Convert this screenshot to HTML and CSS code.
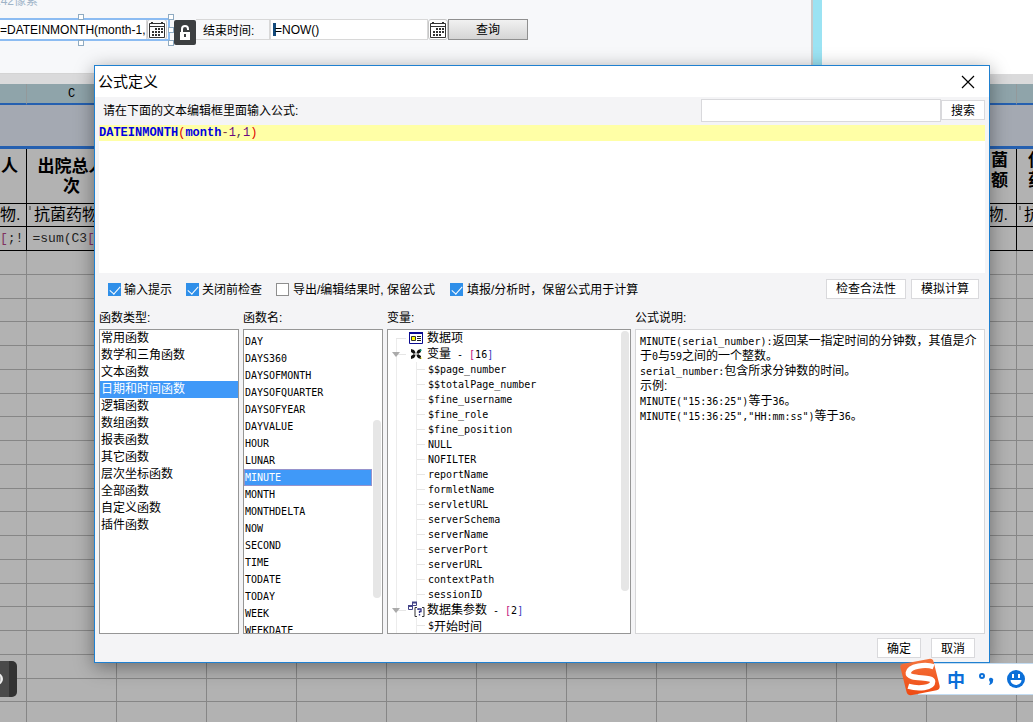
FILE: index.html
```html
<!DOCTYPE html>
<html lang="zh-CN">
<head>
<meta charset="utf-8">
<title>公式定义</title>
<link rel="stylesheet" href="styles.css">
</head>
<body>
<div class="workspace">
  <header class="top">
    <div class="form-area">
      <span class="size-hint">242像素</span>
      <div class="params">
        <div class="picker selected">
          <input class="field" type="text" value="=DATEINMONTH(month-1," aria-label="开始时间">
          <button class="cal" aria-label="选择开始时间"><svg viewBox="0 0 18 18"><path d="M1.5 2.5h15v14h-15zM1 5.5h16" fill="none" stroke="#333"/><path d="M4 1v2M14 1v2" stroke="#333" stroke-width="2"/><path d="M7 8h9M4 11h12M4 14h9" stroke="#333" stroke-width="2" stroke-dasharray="2 1"/></svg></button>
          <i class="handle h1"></i><i class="handle h2"></i><i class="handle h3"></i><i class="handle h4"></i><i class="handle h5"></i>
        </div>
        <button class="lock" aria-label="锁定"><svg viewBox="0 0 22 24"><path d="M6 11h10v8H6z" fill="#fff"/><path d="M8 11V8a3 3 0 0 1 6 0v1" fill="none" stroke="#fff" stroke-width="2"/><path d="M11 13v3" stroke="#3c3f41" stroke-width="2"/></svg></button>
        <label class="caption" for="end">结束时间:</label>
        <div class="picker">
          <input class="field marked" id="end" type="text" value="=NOW()">
          <button class="cal" aria-label="选择结束时间"><svg viewBox="0 0 18 18"><path d="M1.5 2.5h15v14h-15zM1 5.5h16" fill="none" stroke="#333"/><path d="M4 1v2M14 1v2" stroke="#333" stroke-width="2"/><path d="M7 8h9M4 11h12M4 14h9" stroke="#333" stroke-width="2" stroke-dasharray="2 1"/></svg></button>
        </div>
        <button class="query">查询</button>
      </div>
    </div>
    <div class="edge"></div>
  </header>
  <div class="strip"></div>
  <table class="sheet">
    <colgroup><col class="first"><col class="std"><col class="std"><col class="std"><col class="std"><col class="std"><col class="std"><col class="std"><col class="std"><col class="std"><col class="std"><col class="std"><col></colgroup>
    <thead>
      <tr class="letters"><th></th><th>C</th><th></th><th></th><th></th><th></th><th></th><th></th><th></th><th></th><th></th><th></th><th></th></tr>
      <tr class="title"><td colspan="13"></td></tr>
    </thead>
    <tbody class="data">
      <tr class="heads"><th class="end">人<br>&nbsp;</th><th>出院总人<br>次</th><th></th><th></th><th></th><th></th><th></th><th></th><th></th><th></th><th></th><th class="end up">菌<br>额</th><th class="start up">使<br>药</th></tr>
      <tr class="fields"><td class="end">物.</td><td class="start mark">抗菌药物</td><td></td><td></td><td></td><td></td><td></td><td></td><td></td><td></td><td></td><td class="end">物.</td><td class="start mark">抗</td></tr>
      <tr class="sums"><td class="end"><div><b>[</b>;!</div></td><td><div>=sum(C3<b>[</b>;!<br>0])</div></td><td></td><td></td><td></td><td></td><td></td><td></td><td></td><td></td><td></td><td></td><td></td></tr>
    </tbody>
    <tbody class="blank">
      <tr><td></td><td></td><td></td><td></td><td></td><td></td><td></td><td></td><td></td><td></td><td></td><td></td><td></td></tr>
      <tr><td></td><td></td><td></td><td></td><td></td><td></td><td></td><td></td><td></td><td></td><td></td><td></td><td></td></tr>
      <tr><td></td><td></td><td></td><td></td><td></td><td></td><td></td><td></td><td></td><td></td><td></td><td></td><td></td></tr>
      <tr><td></td><td></td><td></td><td></td><td></td><td></td><td></td><td></td><td></td><td></td><td></td><td></td><td></td></tr>
      <tr><td></td><td></td><td></td><td></td><td></td><td></td><td></td><td></td><td></td><td></td><td></td><td></td><td></td></tr>
      <tr><td></td><td></td><td></td><td></td><td></td><td></td><td></td><td></td><td></td><td></td><td></td><td></td><td></td></tr>
      <tr><td></td><td></td><td></td><td></td><td></td><td></td><td></td><td></td><td></td><td></td><td></td><td></td><td></td></tr>
      <tr><td></td><td></td><td></td><td></td><td></td><td></td><td></td><td></td><td></td><td></td><td></td><td></td><td></td></tr>
      <tr><td></td><td></td><td></td><td></td><td></td><td></td><td></td><td></td><td></td><td></td><td></td><td></td><td></td></tr>
      <tr><td></td><td></td><td></td><td></td><td></td><td></td><td></td><td></td><td></td><td></td><td></td><td></td><td></td></tr>
      <tr><td></td><td></td><td></td><td></td><td></td><td></td><td></td><td></td><td></td><td></td><td></td><td></td><td></td></tr>
      <tr><td></td><td></td><td></td><td></td><td></td><td></td><td></td><td></td><td></td><td></td><td></td><td></td><td></td></tr>
      <tr><td></td><td></td><td></td><td></td><td></td><td></td><td></td><td></td><td></td><td></td><td></td><td></td><td></td></tr>
      <tr><td></td><td></td><td></td><td></td><td></td><td></td><td></td><td></td><td></td><td></td><td></td><td></td><td></td></tr>
      <tr><td></td><td></td><td></td><td></td><td></td><td></td><td></td><td></td><td></td><td></td><td></td><td></td><td></td></tr>
      <tr><td></td><td></td><td></td><td></td><td></td><td></td><td></td><td></td><td></td><td></td><td></td><td></td><td></td></tr>
      <tr><td></td><td></td><td></td><td></td><td></td><td></td><td></td><td></td><td></td><td></td><td></td><td></td><td></td></tr>
      <tr><td></td><td></td><td></td><td></td><td></td><td></td><td></td><td></td><td></td><td></td><td></td><td></td><td></td></tr>
      <tr><td></td><td></td><td></td><td></td><td></td><td></td><td></td><td></td><td></td><td></td><td></td><td></td><td></td></tr>
      <tr><td></td><td></td><td></td><td></td><td></td><td></td><td></td><td></td><td></td><td></td><td></td><td></td><td></td></tr>
    </tbody>
  </table>

  <section class="dialog" role="dialog" aria-labelledby="dlg-title">
    <div class="titlebar">
      <h1 id="dlg-title">公式定义</h1>
      <button class="close" aria-label="关闭"><svg viewBox="0 0 14 14"><path d="M1 1l12 12M13 1L1 13" stroke="#000" stroke-width="1.2"/></svg></button>
    </div>
    <div class="content">
      <div class="search-row">
        <span class="prompt">请在下面的文本编辑框里面输入公式:</span>
        <input class="search" type="text" aria-label="搜索函数">
        <button class="btn">搜索</button>
      </div>
      <div class="editor" contenteditable="true" role="textbox" aria-label="公式" spellcheck="false"><div class="line"><b>DATEINMONTH</b><span class="paren">(</span><b>month</b><span class="op">-</span><span class="num">1</span>,<span class="num">1</span><span class="paren">)</span></div></div>
      <div class="options">
        <label><input type="checkbox" checked>输入提示</label>
        <label><input type="checkbox" checked>关闭前检查</label>
        <label class="wide"><input type="checkbox">导出/编辑结果时, 保留公式</label>
        <label class="wide"><input type="checkbox" checked>填报/分析时，保留公式用于计算</label>
        <div class="actions"><button class="btn">检查合法性</button><button class="btn">模拟计算</button></div>
      </div>
      <div class="panels">
        <h2>函数类型:</h2><h2>函数名:</h2><h2>变量:</h2><h2>公式说明:</h2>
        <ul class="list" role="listbox" aria-label="函数类型">
          <li>常用函数</li><li>数学和三角函数</li><li>文本函数</li><li class="on">日期和时间函数</li><li>逻辑函数</li><li>数组函数</li><li>报表函数</li><li>其它函数</li><li>层次坐标函数</li><li>全部函数</li><li>自定义函数</li><li>插件函数</li>
        </ul>
        <div class="box">
          <ul class="list names" role="listbox" aria-label="函数名">
            <li>DAY</li><li>DAYS360</li><li>DAYSOFMONTH</li><li>DAYSOFQUARTER</li><li>DAYSOFYEAR</li><li>DAYVALUE</li><li>HOUR</li><li>LUNAR</li><li class="on">MINUTE</li><li>MONTH</li><li>MONTHDELTA</li><li>NOW</li><li>SECOND</li><li>TIME</li><li>TODATE</li><li>TODAY</li><li>WEEK</li><li>WEEKDATE</li>
          </ul>
          <i class="thumb low"></i>
        </div>
        <div class="box">
          <ul class="tree">
            <li><div class="node"><i class="twig"></i><svg class="icon" viewBox="0 0 14 14"><path d="M.5 1.500h13v11H.5z" fill="#fff" stroke="#0a0a90"/><path d="M0 2h14" stroke="#0a0a90" stroke-width="2"/><path d="M2.500 5.500h4v4h-4z" fill="#ff0" stroke="#333"/><path d="M8 5.500h4M8 7.500h4M8 9.500h4" stroke="#222"/></svg>数据项</div></li>
            <li><div class="node"><i class="twig arrow"></i><svg class="icon" viewBox="0 0 14 14"><path d="M2 2l3 1 2 3 2-3 3-1v3L9 7l3 2v3l-3-1-2-3-2 3-3 1V9l3-2-3-2z" fill="#111"/><path d="M7 5v4M5 7h4" stroke="#fff"/><path d="M11 2l2 1-2 2z" fill="#0a8a70"/><path d="M11 10l2 1-1 1z" fill="#dd0"/></svg>变量<span class="lat">&nbsp;- <b>[</b>16<b class="r">]</b></span></div>
              <ul>
                <li>$$page_number</li><li>$$totalPage_number</li><li>$fine_username</li><li>$fine_role</li><li>$fine_position</li><li>NULL</li><li>NOFILTER</li><li>reportName</li><li>formletName</li><li>servletURL</li><li>serverSchema</li><li>serverName</li><li>serverPort</li><li>serverURL</li><li>contextPath</li><li>sessionID</li>
              </ul>
            </li>
            <li><div class="node"><i class="twig arrow"></i><svg class="icon" viewBox="0 0 14 14"><path d="M3.500-.5h4v3h-4zM-.5 2.500h4v4h-4z" fill="#fff" stroke="#448"/><path d="M3-.5h5M-1 3h5" stroke="#448" stroke-width="2"/><path d="M8 4.500H6v9h2M13 4.500h2v9h-2" fill="none" stroke="#333"/><path d="M9 7V6h3v2.500h-1.500V10M10.500 11v1.500" fill="none" stroke="#338" stroke-width="1.300"/></svg>数据集参数<span class="lat">&nbsp;- <b>[</b>2<b class="r">]</b></span></div>
              <ul><li>$<span class="han">开始时间</span></li></ul>
            </li>
          </ul>
          <i class="thumb high"></i>
        </div>
        <div class="desc">
          <p><span class="lat">MINUTE(serial_number):</span>返回某一指定时间的分钟数，其值是介于<span class="lat">0</span>与<span class="lat">59</span>之间的一个整数。</p>
          <p><span class="lat">serial_number:</span>包含所求分钟数的时间。</p>
          <p>示例:</p>
          <p><span class="lat">MINUTE("15:36:25")</span>等于<span class="lat">36</span>。</p>
          <p><span class="lat">MINUTE("15:36:25","HH:mm:ss")</span>等于<span class="lat">36</span>。</p>
        </div>
      </div>
      <div class="footer"><button class="btn">确定</button><button class="btn">取消</button></div>
    </div>
  </section>

  <button class="side-tab" aria-label="展开"><i></i></button>
  <div class="ime">
    <svg class="sogou" viewBox="0 0 40 40"><defs><linearGradient id="g" x1="0" y1="0" x2="0" y2="1"><stop offset="0" stop-color="#f4733c"/><stop offset="1" stop-color="#ef4a12"/></linearGradient></defs><path d="M3 6L29 1q4-1 5 3l6 24q1 4-3 5l-25 5q-5 1-6-4L0 10q-1-3 3-4z" fill="url(#g)"/><path d="M34 9C26 6 9 8 8 15c-1 8 25 3 25 9 0 7-15 8-25 5" fill="none" stroke="#fff" stroke-width="5.500"/></svg>
    <button class="tool">中</button>
    <button class="tool" aria-label="中文标点"><svg viewBox="0 0 18 18"><circle cx="5" cy="6" r="2" fill="none" stroke="#0b6fd8" stroke-width="2"/><path d="M12 9a2 2 0 1 1 4 2q0 3-4 4 1-2 1-3-1-1-1-3z" fill="#0b6fd8"/></svg></button>
    <button class="tool" aria-label="表情"><svg viewBox="0 0 18 18"><circle cx="9" cy="9" r="9" fill="#0b6fd8"/><path d="M5 4h2v4H5zM11 4h2v4h-2zM3.500 10h11a5.500 5 0 0 1-11 0z" fill="#fff"/></svg></button>
  </div>
</div>
</body>
</html>
```
FILE: styles.css
```css
* { box-sizing: border-box; }
body {
  margin: 0;
  font: 12px/16px "Liberation Sans", "Noto Sans CJK SC", sans-serif;
  color: #000;
}
button, input { font: inherit; color: inherit; }
button { padding: 0; cursor: pointer; }
ul { list-style: none; margin: 0; padding: 0; }
p { margin: 0; }
svg { display: block; }

.workspace { position: relative; min-height: 100vh; height: 100vh; overflow: hidden; background: #b2b2b2; }

/* parameter pane */
.top { display: flex; height: 74px; background: #fff; }
.form-area { position: relative; width: 811px; background: #f7f8fa; border-bottom: 1px solid #d4d4d4; padding-top: 19px; }
.edge { width: 11px; background: #9be3f3; border-left: 2px solid #c9c9c9; }
.size-hint { position: absolute; left: -6px; top: -7px; color: #9fb4c8; }
.params { display: flex; align-items: flex-start; }
.picker { display: flex; height: 21px; }
.picker.selected { position: relative; width: 169px; outline: 1px solid #8cbcf2; }
.picker.selected::after { content: ""; position: absolute; inset: 0; border: 1px solid #8cbcf2; border-left: 0; pointer-events: none; }
.field { width: 158px; border: 1px solid #d8d8d8; background: #fff; padding: 0 4px; height: 21px; line-height: 18px; }
.selected .field { width: 147px; padding: 0; border-left: 0; }
.marked { background: linear-gradient(#144a7c, #144a7c) 2px 3px / 3px 13px no-repeat #fff; }
.cal { width: 20px; height: 21px; border: 1px solid #c6c6c6; border-radius: 3px; background: #fff; }
.cal svg { width: 18px; height: 18px; }
.handle { position: absolute; width: 6px; height: 6px; background: #fff; border: 1px solid #8fabc2; z-index: 1; }
.h1 { left: 78px; top: -5px; } .h2 { left: 168px; top: -5px; }
.h3 { left: 78px; top: 21px; } .h4 { left: 168px; top: 21px; } .h5 { left: 168px; top: 8px; }
.lock { width: 22px; height: 25px; margin: 1px 0 0 5px; border: 0; border-radius: 2px; background: #3c3f41; }
.lock svg { width: 22px; height: 24px; }
.caption { width: 74px; height: 21px; padding: 3px 0 0 7px; border: 1px solid #d8d8d8; border-left: 0; }
.query { width: 80px; height: 21px; border: 1px solid #8f8f8f; background: linear-gradient(#f1f1f1, #d5d5d5); }
.strip { height: 10px; background: #dadadb; }

/* report grid */
.sheet { width: 100%; table-layout: fixed; border-collapse: separate; border-spacing: 0; }
.sheet .first { width: 27px; }
.sheet .std { width: 90px; }
.sheet th, .sheet td { padding: 0; overflow: hidden; white-space: nowrap; text-align: center; border-right: 1px solid #868686; }
.letters th { height: 21px; background: #8fa4aa; border-color: #93999b; border-bottom: 2px solid #2560b0; font: 12px/18px "Liberation Mono", monospace; }
.sheet .title td { height: 44px; background: #a4a9b2; border: 0; border-bottom: 3px solid #2560b0; }
.data th, .sheet .data td { border-color: #000; border-bottom: 1px solid #000; }
.sheet .heads th { height: 55px; padding-top: 2px; font-size: 17px; line-height: 20px; border-color: #000; }
.sheet .fields td { height: 23px; font-size: 16px; line-height: 22px; }
.sheet .sums td { height: 24px; font: 13px/22px "Liberation Mono", monospace; color: #222; }
.sums div { height: 23px; padding-top: 2px; overflow: hidden; line-height: 20px; }
.sums b { font-weight: 400; color: #803060; }
.sheet .end { text-align: right; padding-right: 8px; }
.sheet .sums .end { padding-right: 4px; }
.sheet .start { text-align: left; padding-left: 11px; }
.sheet .mark { padding-left: 7px; background: linear-gradient(#777, #777) 2px 2px / 2px 4px no-repeat; }
.sheet .up { vertical-align: top; }
.sheet .blank td { height: 24px; border-bottom: 1px solid #868686; }
.sheet .blank tr:nth-child(4n+3) td { height: 23px; }
.sheet tr > :last-child { border-right: 0; }

/* dialog window */
.dialog {
  position: absolute; left: 94px; right: 43px; top: 65px;
  border: 1px solid #1f80d0; background: #f4f4f6;
  box-shadow: 0 4px 18px rgba(0, 0, 0, .4);
}
.titlebar { display: flex; justify-content: space-between; align-items: center; height: 31px; padding: 0 14px 0 3px; background: #fff; }
.titlebar h1 { margin: 0; font-size: 15px; line-height: 20px; font-weight: 400; }
.close { width: 14px; height: 14px; border: 0; background: none; }
.content { padding: 2px 4px 4px; }
.search-row { display: flex; align-items: flex-start; height: 26px; }
.prompt { flex: 1; padding: 4px 0 0 4px; }
.search { width: 240px; height: 23px; border: 1px solid #d9d9dc; background: #fff; }
.btn { height: 20px; padding: 1px 9px 0; border: 1px solid #d9d9dc; background: #fff; line-height: 16px; }
.search-row .btn { margin-top: 1px; }
.editor { height: 148px; background: #fff; outline: 0; font: 12px/16px "Liberation Mono", monospace; color: #444; }
.line { height: 16px; background: #ffffa6; }
.line b { color: #0000e0; }
.paren { color: #e00000; }
.op { color: #804040; }
.num { color: #6a0a80; }
.options { display: flex; align-items: center; height: 32px; padding: 1px 6px 0 9px; gap: 14px; }
.options label { display: flex; align-items: center; gap: 3px; white-space: nowrap; }
.options .wide { gap: 4px; min-width: 160px; }
.options input { appearance: none; position: relative; width: 13px; height: 13px; margin: 0; border: 1px solid #8e8e8e; background: #fff; }
.options input:checked { border-color: #2f8fe9; background: #2f8fe9; }
.options input:checked::after { content: ""; position: absolute; left: 3px; top: 0; width: 5px; height: 9px; border: solid #fff; border-width: 0 1px 1px 0; transform: rotate(42deg); }
.actions { display: flex; gap: 5px; margin: -2px 0 0 auto; }

.panels { display: grid; grid-template-columns: 140px 140px 244px 1fr; column-gap: 4px; }
.panels h2 { margin: 0; height: 24px; padding-top: 5px; font-size: 12px; font-weight: 400; }
.list, .box, .desc { height: 305px; border: 1px solid #969696; background: #fff; overflow: hidden; }
.box { position: relative; }
.list li { height: 17px; line-height: 17px; padding-left: 1px; }
.list .on { background: #4099f8; color: #fff; }
.box .list { border: 0; }
.names { padding: 3px 10px 0 0; }
.names, .lat, .tree ul { font: 10px/15px "DejaVu Sans Mono", monospace; }
.names .on { border: 1px solid #9693cc; padding-left: 0; line-height: 15px; }
.thumb { position: absolute; right: 1px; width: 8px; border-radius: 4px; background: #e6e6e6; }
.low { top: 90px; height: 178px; }
.high { top: 1px; height: 260px; }
.node { display: flex; align-items: center; height: 16px; padding-left: 4px; }
.twig { position: relative; width: 17px; height: 16px; }
.twig::before { content: ""; position: absolute; left: 4px; top: 8px; width: 10px; border-top: 1px solid #e6e6e6; }
.arrow::after { content: ""; position: absolute; left: 0; top: 6px; border: 4px solid transparent; border-top: 5px solid #aaa; }
.icon { width: 14px; height: 14px; margin-right: 4px; overflow: visible; }
.tree { background: linear-gradient(#ececec, #ececec) 8px 8px / 1px 100% no-repeat; }
.tree ul { margin-left: 28px; border-left: 1px solid #ececec; }
.tree ul li { display: flex; align-items: center; height: 15px; }
.tree ul li::before { content: ""; width: 8px; margin-right: 3px; border-top: 1px solid #e6e6e6; }
.tree b { font-weight: 400; color: #c0147c; }
.tree .r { color: #4038c0; }
.han { font: 12px/15px "Noto Sans CJK SC", sans-serif; }
.desc { border-color: #d6d6d8; padding: 4px; line-height: 15px; }
.footer { display: flex; justify-content: flex-end; gap: 10px; padding: 4px 10px 0 0; }

/* floating widgets */
.side-tab { position: absolute; left: 0; bottom: 25px; width: 17px; height: 36px; border: 0; border-radius: 0 5px 5px 0; background: linear-gradient(90deg, #4a4a4a 9px, #333 9px); overflow: hidden; }
.side-tab i { position: absolute; left: -9px; top: 12px; width: 12px; height: 12px; border-radius: 50%; border: 2px solid #eee; background: #bbb; }
.ime { position: absolute; right: 0; bottom: 27px; display: flex; align-items: center; gap: 12px; width: 115px; height: 32px; padding: 0 8px 0 28px; background: #fff; border: 1px solid #c3dcf2; border-right: 0; }
.sogou { position: absolute; left: -19px; top: -6px; width: 40px; height: 39px; }
.tool { width: 18px; height: 18px; border: 0; background: none; color: #0b6fd8; font: bold 18px/18px "Noto Sans CJK SC", sans-serif; }
```
